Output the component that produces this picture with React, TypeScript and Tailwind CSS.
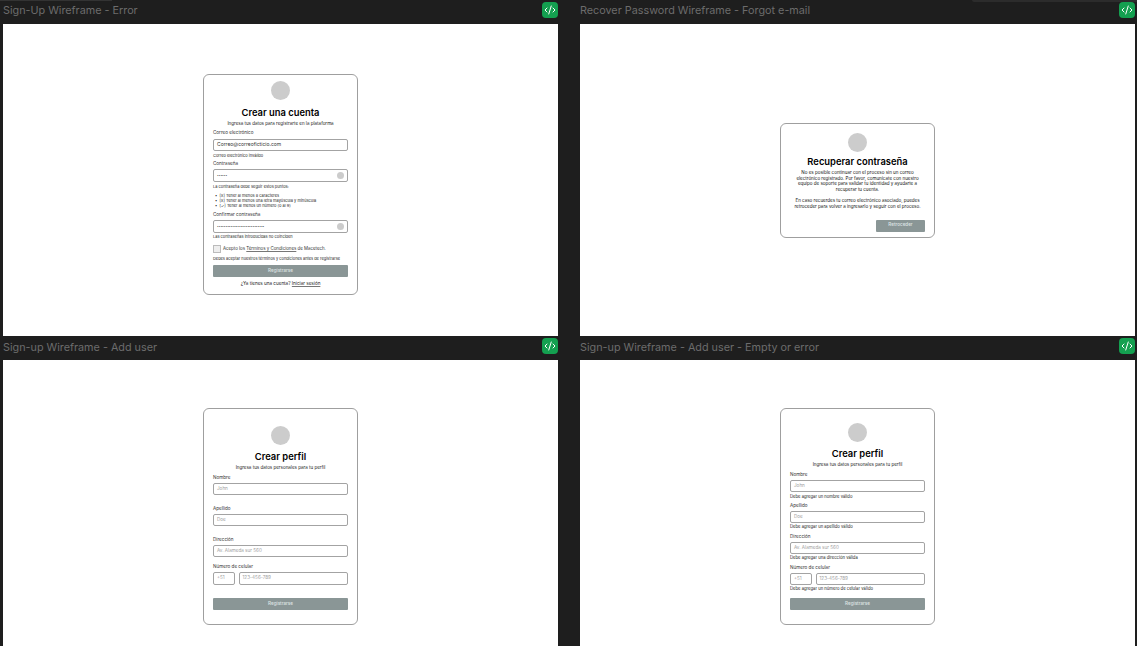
import React from "react";
import { CodeXml } from "lucide-react";

const Header = ({ title, low = false }: { title: string; low?: boolean }) => (
  <div className="flex h-6 items-start justify-between">
    <span className={`text-[10.8px] leading-[14px] text-[#6c6c6c] ${low ? "mt-[5px]" : "mt-[4px]"}`}>{title}</span>
    <div className="mt-[2px] flex h-4 w-4 items-center justify-center rounded-[4px] bg-[#14a050] text-white">
      <CodeXml size={12} strokeWidth={2} />
    </div>
  </div>
);

const Avatar = ({ className = "" }: { className?: string }) => (
  <div className={`mx-auto h-[19px] w-[19px] rounded-full bg-[#cccccc] ${className}`} />
);

const Label = ({ children, className = "" }: { children: React.ReactNode; className?: string }) => (
  <div className={`h-[6px] text-[4.6px] leading-[6px] text-[#333333] ${className}`}>{children}</div>
);

const Note = ({ children, className = "" }: { children: React.ReactNode; className?: string }) => (
  <div className={`h-[5px] whitespace-nowrap text-[3.95px] leading-[5px] text-[#222222] ${className}`}>{children}</div>
);

const Input = ({
  children,
  className = "",
  dark = false,
  eye = false,
  dots = false,
}: {
  children: React.ReactNode;
  className?: string;
  dark?: boolean;
  eye?: boolean;
  dots?: boolean;
}) => (
  <div
    className={`flex items-center justify-between rounded-[2px] border-[1px] border-[#a3a3a3] bg-white px-[3px] ${className}`}
  >
    <span
      className={
        dots
          ? "text-[3px] text-[#444444]"
          : dark
            ? "text-[5px] text-[#333333]"
            : "text-[4.6px] text-[#a0a0a0]"
      }
    >
      {children}
    </span>
    {eye && <span className="h-[7px] w-[7px] rounded-full bg-[#cccccc]" />}
  </div>
);

const Btn = ({ children, className = "" }: { children: React.ReactNode; className?: string }) => (
  <div
    className={`flex h-3 items-center justify-center rounded-[1px] bg-[#8a9696] text-[4.6px] font-medium text-[#dfe4e4] ${className}`}
  >
    {children}
  </div>
);

const Card = ({ children, className = "" }: { children: React.ReactNode; className?: string }) => (
  <div className={`mx-auto w-[155px] rounded-[6px] border-[1px] border-[#9f9f9f] bg-white px-[9px] ${className}`}>
    {children}
  </div>
);

const Title = ({ children, className = "" }: { children: React.ReactNode; className?: string }) => (
  <div className={`h-3 text-center text-[9.4px] font-semibold leading-3 text-black ${className}`}>{children}</div>
);

const Sub = ({ children, className = "" }: { children: React.ReactNode; className?: string }) => (
  <div className={`h-[6px] whitespace-nowrap text-center text-[4.5px] leading-[6px] text-[#222222] ${className}`}>
    {children}
  </div>
);

const Phone = ({ className = "" }: { className?: string }) => (
  <div className={`flex gap-[3.5px] ${className}`}>
    <Input className="w-[22px]">+51</Input>
    <Input className="flex-1">123-456-789</Input>
  </div>
);

const SignUpError = () => (
  <Card className="h-[221px] pt-[6px]">
    <Avatar />
    <Title className="mt-[7px]">Crear una cuenta</Title>
    <Sub className="mt-[2px]">Ingresa tus datos para registrarte en la plataforma</Sub>
    <Label className="mt-[3px]">Correo electrónico</Label>
    <Input dark className="mt-[3px] h-3">Correo@correoficticio.com</Input>
    <Note className="mt-[2px]">Correo electrónico inválido</Note>
    <Label className="mt-[3px]">Contraseña</Label>
    <Input dots eye className="mt-[2px] h-[13px]">••••••</Input>
    <Note className="mt-[2px]">La contraseña debe seguir estos puntos:</Note>
    <ul className="mt-[4px] pl-[2px]">
      <Note>•&nbsp;&nbsp;[X] Tener al menos 8 caracteres</Note>
      <Note>•&nbsp;&nbsp;[X] Tener al menos una letra mayúscula y minúscula</Note>
      <Note>•&nbsp;&nbsp;[✓] Tener al menos un número (0 al 9)</Note>
    </ul>
    <Label className="mt-[4px]">Confirmar contraseña</Label>
    <Input dots eye className="mt-[2px] h-[13px]">••••••••••••••••••••••••••••</Input>
    <Note className="mt-[1px]">Las contraseñas introducidas no coinciden</Note>
    <div className="mt-[6px] flex h-2 items-center gap-[2px]">
      <span className="h-2 w-2 border-[1px] border-[#bbbbbb] bg-[#eeeeee]" />
      <span className="text-[4.4px] text-[#333333]">
        Acepto los <span className="underline decoration-[#777777]">Términos y Condiciones</span> de Macetech.
      </span>
    </div>
    <Note className="mt-[3px]">Debes aceptar nuestros términos y condiciones antes de registrarse</Note>
    <Btn className="mt-[4px]">Registrarse</Btn>
    <Sub className="mt-[4px] text-[4.6px]">
      ¿Ya tienes una cuenta? <span className="underline decoration-[#777777]">Iniciar sesión</span>
    </Sub>
  </Card>
);

const Recover = () => (
  <Card className="h-[115px] pt-[9px]">
    <Avatar />
    <Title className="mt-[4px]">Recuperar contraseña</Title>
    <div className="mt-[2px] text-center text-[4.5px] leading-[5.6px] text-[#111111]">
      <p>
        No es posible continuar con el proceso sin un correo
        <br />
        electrónico registrado. Por favor, comunícate con nuestro
        <br />
        equipo de soporte para validar tu identidad y ayudarte a
        <br />
        recuperar tu cuenta.
      </p>
      <p className="mt-[6px]">
        En caso recuerdes tu correo electrónico asociado, puedes
        <br />
        retroceder para volver a ingresarlo y seguir con el proceso.
      </p>
    </div>
    <div className="mt-[10px] flex justify-end">
      <Btn className="w-[49px]">Retroceder</Btn>
    </div>
  </Card>
);

const ProfileForm = () => (
  <Card className="h-[217px] pt-[17px]">
    <Avatar />
    <Title className="mt-[6px]">Crear perfil</Title>
    <Sub className="mt-[2px]">Ingresa tus datos personales para tu perfil</Sub>
    <Label className="mt-[4px]">Nombre</Label>
    <Input className="mt-[2px] h-3">John</Input>
    <Label className="mt-[11px]">Apellido</Label>
    <Input className="mt-[2px] h-3">Doe</Input>
    <Label className="mt-[11px]">Dirección</Label>
    <Input className="mt-[2px] h-3">Av. Alameda sur 560</Input>
    <Label className="mt-[7px]">Número de celular</Label>
    <Phone className="mt-[2px] h-[13px]" />
    <Btn className="mt-[13px]">Registrarse</Btn>
  </Card>
);

const ProfileError = () => (
  <Card className="h-[217px] pt-[14px]">
    <Avatar />
    <Title className="mt-[6px]">Crear perfil</Title>
    <Sub className="mt-[2px]">Ingresa tus datos personales para tu perfil</Sub>
    <Label className="mt-[4px]">Nombre</Label>
    <Input className="mt-[2px] h-3">John</Input>
    <Note className="mt-[2px] text-[4.2px]">Debe agregar un nombre válido</Note>
    <Label className="mt-[4px]">Apellido</Label>
    <Input className="mt-[2px] h-3">Doe</Input>
    <Note className="mt-[1px] text-[4.2px]">Debe agregar un apellido válido</Note>
    <Label className="mt-[5px]">Dirección</Label>
    <Input className="mt-[2px] h-3">Av. Alameda sur 560</Input>
    <Note className="mt-[1px] text-[4.2px]">Debe agregar una dirección válida</Note>
    <Label className="mt-[5px]">Número de celular</Label>
    <Phone className="mt-[2px] h-3" />
    <Note className="mt-[1px] text-[4.2px]">Debe agregar un número de celular válido</Note>
    <Btn className="mt-[7px]">Registrarse</Btn>
  </Card>
);

const Cell = ({
  title,
  children,
  frame,
  low = false,
}: {
  title: string;
  children: React.ReactNode;
  frame: string;
  low?: boolean;
}) => (
  <div className="flex flex-col">
    <Header title={title} low={low} />
    <div className={`bg-white ${frame}`}>{children}</div>
  </div>
);

export default function App() {
  return (
    <div
      className="relative h-[646px] w-[1137px] overflow-hidden bg-[#1e1e1e] pl-[3px] pr-[2px]"
      style={{ fontFamily: "Inter, 'Noto Sans', sans-serif" }}
    >
      <div className="absolute left-0 top-0 h-px w-[112px] bg-[#333333]" />
      <div className="absolute left-[972px] top-0 h-[2px] w-[165px] rounded-bl-[2px] bg-[#2c2c2c]" />
      <div className="grid grid-cols-[555px_555px] gap-x-[22px]">
        <Cell title="Sign-Up Wireframe - Error" frame="h-[312px] pt-[50px]">
          <SignUpError />
        </Cell>
        <Cell title="Recover Password Wireframe - Forgot e-mail" frame="h-[312px] pt-[99px]">
          <Recover />
        </Cell>
        <Cell low title="Sign-up Wireframe - Add user" frame="h-[286px] pt-[48px]">
          <ProfileForm />
        </Cell>
        <Cell low title="Sign-up Wireframe - Add user - Empty or error" frame="h-[286px] pt-[48px]">
          <ProfileError />
        </Cell>
      </div>
    </div>
  );
}
